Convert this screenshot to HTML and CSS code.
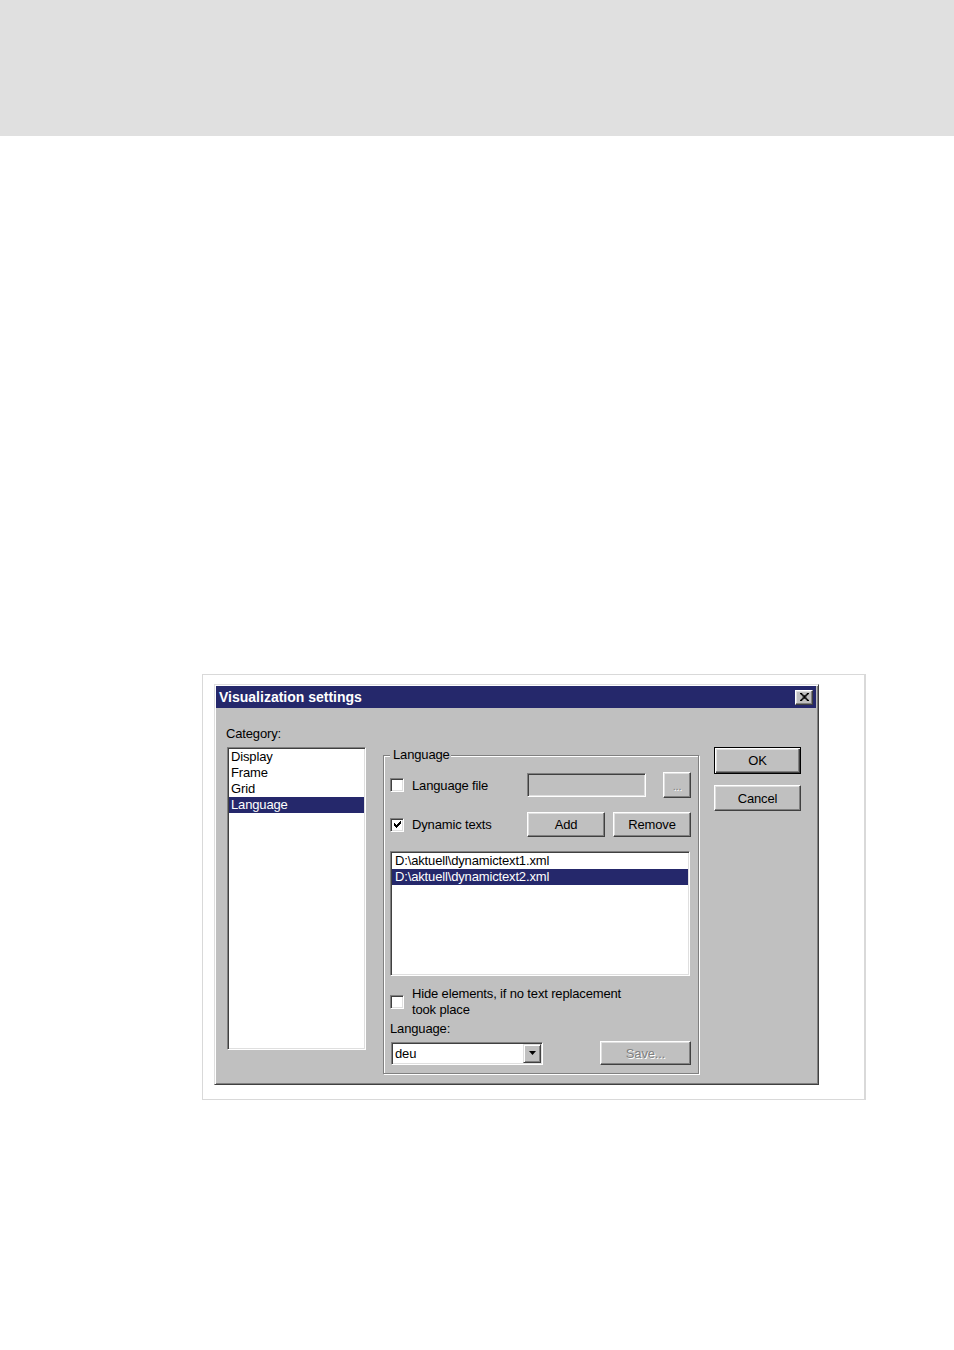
FILE: index.html
```html
<!DOCTYPE html>
<html>
<head>
<meta charset="utf-8">
<title>Visualization settings</title>
<link rel="stylesheet" href="styles.css">
</head>
<body>
<div class="topband"></div>
<div class="figure">
  <div class="dialog">
    <div class="titlebar">
      <span class="title">Visualization settings</span>
      <span class="close">
        <svg width="9" height="8" viewBox="0 0 8 7"><path d="M0 0h2v1H0z M6 0h2v1H6z M1 1h2v1H1z M5 1h2v1H5z M2 2h4v1H2z M3 3h2v1H3z M2 4h4v1H2z M1 5h2v1H1z M5 5h2v1H5z M0 6h2v1H0z M6 6h2v1H6z" fill="#000"/></svg>
      </span>
    </div>
    <div class="dlg-body">
      <div class="col-left">
        <div class="label cat-label">Category:</div>
        <div class="listbox cat-list">
          <div class="item">Display</div>
          <div class="item">Frame</div>
          <div class="item">Grid</div>
          <div class="item sel">Language</div>
        </div>
      </div>
      <fieldset class="group">
        <legend>Language</legend>
        <div class="row r1">
          <span class="ckwrap"><span class="check"></span></span>
          <span class="cklabel">Language file</span>
          <span class="textfield"></span>
          <span class="btn dis browse">...</span>
        </div>
        <div class="row r2">
          <span class="ckwrap"><span class="check"><svg width="7" height="7" viewBox="0 0 7 7"><path d="M0 2h1v3H0z M1 3h1v3H1z M2 4h1v3H2z M3 3h1v3H3z M4 2h1v3H4z M5 1h1v3H5z M6 0h1v3H6z" fill="#000"/></svg></span></span>
          <span class="cklabel">Dynamic texts</span>
          <span class="btn small">Add</span>
          <span class="btn small remove">Remove</span>
        </div>
        <div class="listbox files">
          <div class="item">D:\aktuell\dynamictext1.xml</div>
          <div class="item sel">D:\aktuell\dynamictext2.xml</div>
        </div>
        <div class="row r3">
          <span class="ckwrap"><span class="check"></span></span>
          <span class="cklabel multi">Hide elements, if no text replacement<br>took place</span>
        </div>
        <div class="label lang-label">Language:</div>
        <div class="row r4">
          <span class="combo">
            <span class="combo-text">deu</span>
            <span class="combo-btn"><svg width="7" height="4" viewBox="0 0 7 4"><path d="M0 0h7L3.5 4z" fill="#000"/></svg></span>
          </span>
          <span class="btn dis save">Save...</span>
        </div>
      </fieldset>
      <div class="col-btns">
        <div class="btn default">OK</div>
        <div class="btn cancel">Cancel</div>
      </div>
    </div>
  </div>
</div>
</body>
</html>
```
FILE: styles.css
```css
body {
  margin: 0;
  background: #fff;
  font-family: "Liberation Sans", Arial, sans-serif;
  font-size: 13px;
  letter-spacing: -0.15px;
  color: #000;
}

.topband {
  height: 136px;
  background: #e0e0e0;
}

.figure {
  margin: 538px 0 0 202px;
  width: 664px;
  height: 426px;
  box-sizing: border-box;
  border: 1px solid #d9d9d9;
  border-right-width: 2px;
  padding: 9px 0 0 11px;
}

.dialog {
  width: 605px;
  height: 401px;
  box-sizing: border-box;
  background: #c0c0c0;
  border: 1px solid;
  border-color: #dfdfdf #404040 #404040 #dfdfdf;
  box-shadow: inset 1px 1px #fff, inset -1px -1px #808080;
  padding: 1px;
}

.titlebar {
  height: 22px;
  width: 600px;
  background: #25286b;
  display: flex;
  align-items: center;
  justify-content: space-between;
  padding: 0 3px 0 3px;
  box-sizing: border-box;
  color: #fff;
  font-weight: bold;
  font-size: 14px;
  letter-spacing: 0;
}

.close {
  width: 18px;
  height: 15px;
  box-sizing: border-box;
  background: #c0c0c0;
  border: 1px solid;
  border-color: #fff #404040 #404040 #fff;
  box-shadow: inset -1px -1px #808080, inset 1px 1px #dfdfdf;
  display: flex;
  align-items: center;
  justify-content: center;
}

.dlg-body {
  display: flex;
  align-items: flex-start;
  padding: 17px 0 0 11px;
}

.label {
  line-height: 16px;
  height: 16px;
}

.cat-label {
  margin-left: -1px;
  padding-top: 1px;
  margin-bottom: -1px;
}

.listbox {
  box-sizing: border-box;
  background: #fff;
  border: 1px solid;
  border-color: #808080 #fff #fff #808080;
  box-shadow: inset 1px 1px #404040, inset -1px -1px #dfdfdf;
  padding: 1px;
}

.item {
  line-height: 16px;
  height: 16px;
  white-space: nowrap;
}

.item.sel {
  background: #25286b;
  color: #fff;
}

.cat-list {
  margin-top: 6px;
  width: 139px;
  height: 303px;
}

.cat-list .item {
  padding-left: 2px;
}

.group {
  margin: 22px 0 0 17px;
  width: 316px;
  box-sizing: border-box;
  min-width: 0;
  border: 1px solid #808080;
  box-shadow: inset 1px 1px #fff, 1px 1px #fff;
  padding: 9px 7px 8px 6px;
}

.group legend {
  padding: 0 1px 0 3px;
  line-height: 16px;
  background: #c0c0c0;
}

.row {
  display: flex;
  align-items: center;
}

.ckwrap {
  width: 22px;
  display: flex;
  align-items: center;
}

.check {
  width: 14px;
  height: 14px;
  margin-left: 0;
  box-sizing: border-box;
  background: #fff;
  border: 1px solid;
  border-color: #808080 #fff #fff #808080;
  box-shadow: inset 1px 1px #404040, inset -1px -1px #dfdfdf;
  display: flex;
  align-items: center;
  justify-content: center;
}

.cklabel {
  width: 115px;
  white-space: nowrap;
}

.cklabel.multi {
  width: auto;
  line-height: 16px;
}

.r1 {
  height: 26px;
}

.textfield {
  width: 119px;
  height: 24px;
  box-sizing: border-box;
  background: #c0c0c0;
  border: 1px solid;
  border-color: #808080 #fff #fff #808080;
  box-shadow: inset 1px 1px #404040, inset -1px -1px #dfdfdf;
}

.btn {
  box-sizing: border-box;
  background: #c0c0c0;
  border: 1px solid;
  border-color: #fff #404040 #404040 #fff;
  box-shadow: inset -1px -1px #808080, inset 1px 1px #dfdfdf;
  display: flex;
  align-items: center;
  justify-content: center;
  white-space: nowrap;
}

.btn.dis {
  color: #808080;
  text-shadow: 1px 1px 0 #fff;
}

.browse {
  width: 28px;
  height: 26px;
  margin-left: 17px;
  font-size: 11px;
  padding-top: 2px;
}

.r2 {
  margin-top: 14px;
  height: 25px;
}

.btn.small {
  width: 78px;
  height: 25px;
}

.btn.remove {
  margin-left: 8px;
}

.files {
  margin-top: 14px;
  width: 300px;
  height: 125px;
}

.files .item {
  padding-left: 3px;
}

.r3 {
  margin-top: 10px;
  height: 32px;
}

.lang-label {
  margin-top: 3px;
}

.r4 {
  margin-top: 4px;
  height: 24px;
  justify-content: space-between;
}

.combo {
  width: 152px;
  height: 23px;
  margin-left: 1px;
  box-sizing: border-box;
  background: #fff;
  border: 1px solid;
  border-color: #808080 #fff #fff #808080;
  box-shadow: inset 1px 1px #404040, inset -1px -1px #dfdfdf;
  padding: 1px;
  display: flex;
  align-items: stretch;
}

.combo-text {
  flex: 1;
  padding-left: 2px;
  line-height: 19px;
}

.combo-btn {
  width: 18px;
  box-sizing: border-box;
  background: #c0c0c0;
  border: 1px solid;
  border-color: #dfdfdf #404040 #404040 #dfdfdf;
  box-shadow: inset 1px 1px #fff, inset -1px -1px #808080;
  display: flex;
  align-items: center;
  justify-content: center;
}

.save {
  width: 91px;
  height: 24px;
}

.col-btns {
  margin: 22px 0 0 15px;
  display: flex;
  flex-direction: column;
}

.btn.default {
  width: 87px;
  height: 27px;
  border: 1px solid #000;
  box-shadow: inset 1px 1px #fff, inset -1px -1px #404040, inset -2px -2px #808080, inset 2px 2px #dfdfdf;
}

.btn.cancel {
  width: 87px;
  height: 26px;
  margin-top: 11px;
}
```
